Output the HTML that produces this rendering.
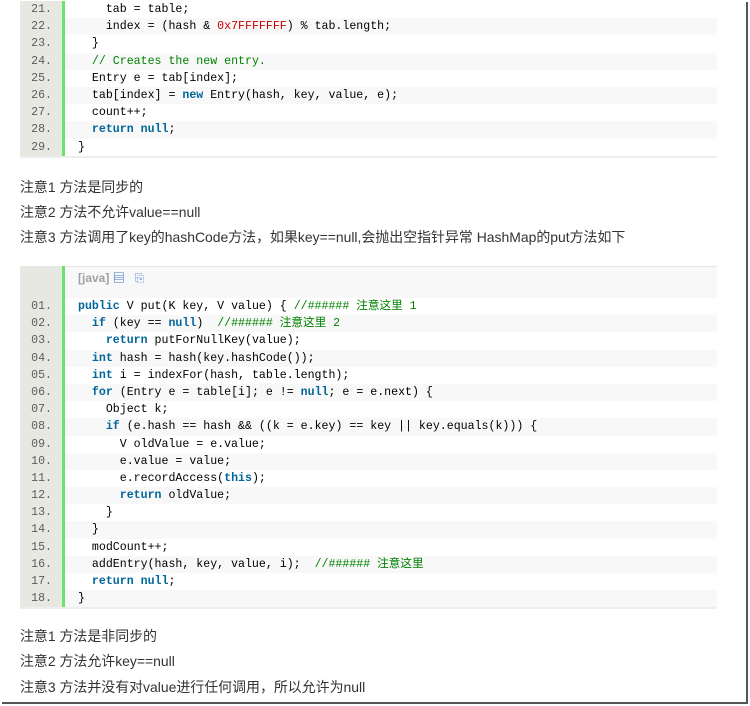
<!DOCTYPE html>
<html><head><meta charset="utf-8"><style>
body{margin:0;width:750px;height:706px;background:#fff;position:relative;overflow:hidden;font-family:"Liberation Sans","Noto Sans CJK SC",sans-serif}
.frame-r{position:absolute;left:746px;top:2px;width:2px;height:702px;background:#555}
.frame-b{position:absolute;left:2px;top:702px;width:746px;height:2px;background:#555}
.blk{position:absolute;left:20px;width:697px}
.row{height:17.2px;display:flex;font-family:"Liberation Mono","Noto Sans CJK SC",monospace;font-size:11.6px;line-height:17.2px;white-space:pre;color:#000}
.row .n{width:45px;background:#e8e8e2;color:#5c5c5c;text-align:right;padding-right:10px;box-sizing:border-box;border-right:3px solid #6ce26c}
.row .c{flex:1;padding-left:13px}
.row:nth-child(even) .c{background:#f8f8f8}
.k{color:#006699;font-weight:bold}
.cm{color:#008200}
.nm{color:#c00}
.hdr{height:32px;display:flex}
.hdr .n{width:45px;background:#e8e8e2;border-right:3px solid #6ce26c;box-sizing:border-box}
.hdr .c{flex:1;background:#f8f8f8;border-top:1px solid #e6e6e6;padding-left:13px;font-size:12px;color:#a0a0a0;font-weight:bold;line-height:22px}
.txt{position:absolute;left:20px;font-size:14px;color:#333;transform:scaleX(0.995);transform-origin:left;white-space:nowrap}
.bl{border-bottom:2px solid #eee}
</style></head><body>
<div class="frame-r"></div><div class="frame-b"></div>
<div class="blk bl" style="top:1px">
<div class="row"><span class="n">21.</span><span class="c">    tab = table;</span></div>
<div class="row"><span class="n">22.</span><span class="c">    index = (hash &amp; <span class="nm">0x7FFFFFFF</span>) % tab.length;</span></div>
<div class="row"><span class="n">23.</span><span class="c">  }</span></div>
<div class="row"><span class="n">24.</span><span class="c">  <span class="cm">// Creates the new entry.</span></span></div>
<div class="row"><span class="n">25.</span><span class="c">  Entry e = tab[index];</span></div>
<div class="row"><span class="n">26.</span><span class="c">  tab[index] = <span class="k">new</span> Entry(hash, key, value, e);</span></div>
<div class="row"><span class="n">27.</span><span class="c">  count++;</span></div>
<div class="row"><span class="n">28.</span><span class="c">  <span class="k">return</span> <span class="k">null</span>;</span></div>
<div class="row"><span class="n">29.</span><span class="c">}</span></div>
</div>
<div class="txt" style="top:177px">注意1 方法是同步的</div>
<div class="txt" style="top:202px">注意2 方法不允许value==null</div>
<div class="txt" style="top:227px">注意3 方法调用了key的hashCode方法，如果key==null,会抛出空指针异常 HashMap的put方法如下</div>
<div class="blk bl" style="top:266px">
<div class="hdr"><span class="n"></span><span class="c">[java] <span style="color:#3a6fc4">▤</span>&nbsp;&nbsp; <span style="color:#6a9ad8;font-weight:normal">⎘</span></span></div>
<div>
<div class="row"><span class="n">01.</span><span class="c"><span class="k">public</span> V put(K key, V value) { <span class="cm">//###### 注意这里 1</span></span></div>
<div class="row"><span class="n">02.</span><span class="c">  <span class="k">if</span> (key == <span class="k">null</span>)  <span class="cm">//###### 注意这里 2</span></span></div>
<div class="row"><span class="n">03.</span><span class="c">    <span class="k">return</span> putForNullKey(value);</span></div>
<div class="row"><span class="n">04.</span><span class="c">  <span class="k">int</span> hash = hash(key.hashCode());</span></div>
<div class="row"><span class="n">05.</span><span class="c">  <span class="k">int</span> i = indexFor(hash, table.length);</span></div>
<div class="row"><span class="n">06.</span><span class="c">  <span class="k">for</span> (Entry e = table[i]; e != <span class="k">null</span>; e = e.next) {</span></div>
<div class="row"><span class="n">07.</span><span class="c">    Object k;</span></div>
<div class="row"><span class="n">08.</span><span class="c">    <span class="k">if</span> (e.hash == hash &amp;&amp; ((k = e.key) == key || key.equals(k))) {</span></div>
<div class="row"><span class="n">09.</span><span class="c">      V oldValue = e.value;</span></div>
<div class="row"><span class="n">10.</span><span class="c">      e.value = value;</span></div>
<div class="row"><span class="n">11.</span><span class="c">      e.recordAccess(<span class="k">this</span>);</span></div>
<div class="row"><span class="n">12.</span><span class="c">      <span class="k">return</span> oldValue;</span></div>
<div class="row"><span class="n">13.</span><span class="c">    }</span></div>
<div class="row"><span class="n">14.</span><span class="c">  }</span></div>
<div class="row"><span class="n">15.</span><span class="c">  modCount++;</span></div>
<div class="row"><span class="n">16.</span><span class="c">  addEntry(hash, key, value, i);  <span class="cm">//###### 注意这里</span></span></div>
<div class="row"><span class="n">17.</span><span class="c">  <span class="k">return</span> <span class="k">null</span>;</span></div>
<div class="row"><span class="n">18.</span><span class="c">}</span></div>
</div>
</div>
<div class="txt" style="top:626px">注意1 方法是非同步的</div>
<div class="txt" style="top:651px">注意2 方法允许key==null</div>
<div class="txt" style="top:677px">注意3 方法并没有对value进行任何调用，所以允许为null</div>
</body></html>
